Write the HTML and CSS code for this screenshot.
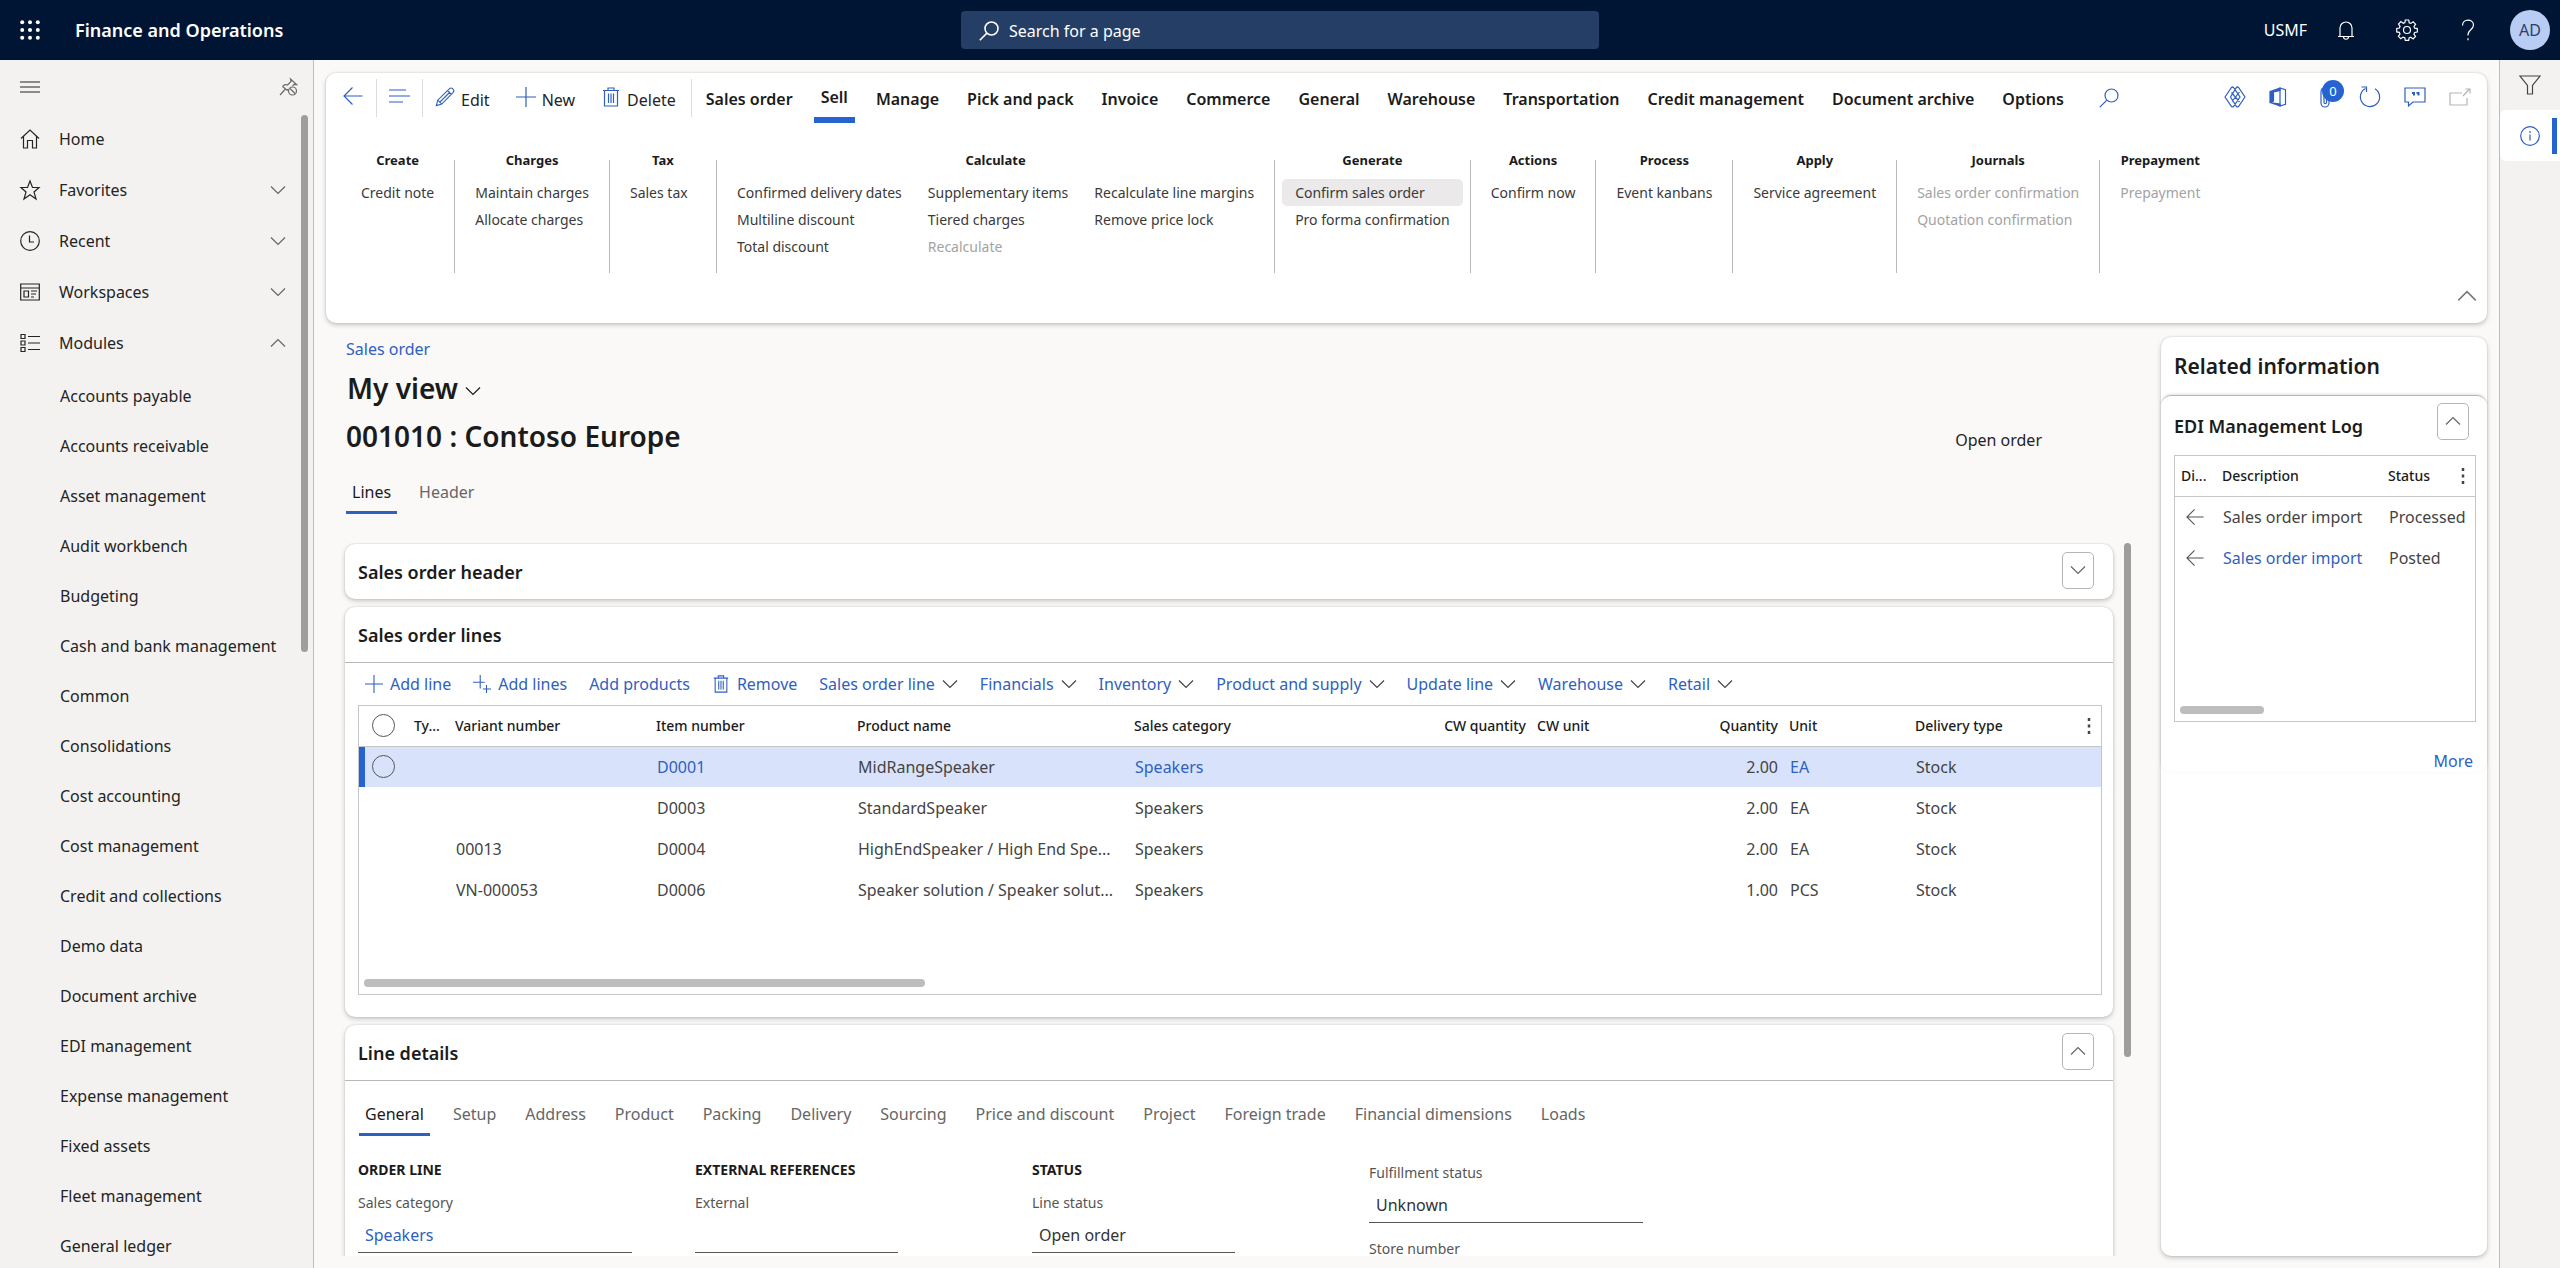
FILE: index.html
```html
<!DOCTYPE html>
<html lang="en">
<head>
<meta charset="utf-8">
<title>Finance and Operations</title>
<link rel="stylesheet" href="styles.css">
</head>
<body>
<svg class="sprite" aria-hidden="true">
  <symbol id="i-down" viewBox="0 0 16 16"><path d="M1 4.5l7 7 7-7"/></symbol>
  <symbol id="i-up" viewBox="0 0 16 16"><path d="M1 11.5l7-7 7 7"/></symbol>
  <symbol id="i-left" viewBox="0 0 20 20"><path d="M19.500 10H1M9.500 1.500L1 10l8.500 8.500"/></symbol>
  <symbol id="i-plus" viewBox="0 0 20 20"><path d="M10 0v20M0 10h20"/></symbol>
  <symbol id="i-plus2" viewBox="0 0 20 20"><path d="M8 0v15M0 8h13M15 11v9M11 15.500h9"/></symbol>
  <symbol id="i-trash" viewBox="0 0 20 20"><path d="M2 3.500h16M7 3.500V1h6v2.500M3.500 3.500V19h13V3.500M7.500 6.500v9.500M10 6.500v9.500M12.500 6.500v9.500"/></symbol>
  <symbol id="i-search" viewBox="0 0 20 20"><circle cx="12.500" cy="7.500" r="6.500"/><path d="M7.900 12.100L.8 19.200"/></symbol>
  <symbol id="i-kebab" viewBox="0 0 4 18"><path d="M2 1v3M2 7.500v3M2 14v3"/></symbol>
</svg>

<header class="topbar">
  <div class="top-left">
    <button class="icon-btn waffle" aria-label="App launcher"><svg width="20" height="20" viewBox="0 0 20 20"><g fill="#fff"><circle cx="2.200" cy="2.200" r="2"/><circle cx="10" cy="2.200" r="2"/><circle cx="17.800" cy="2.200" r="2"/><circle cx="2.200" cy="10" r="2"/><circle cx="10" cy="10" r="2"/><circle cx="17.800" cy="10" r="2"/><circle cx="2.200" cy="17.800" r="2"/><circle cx="10" cy="17.800" r="2"/><circle cx="17.800" cy="17.800" r="2"/></g></svg></button>
    <span class="brand">Finance and Operations</span>
  </div>
  <label class="search"><svg class="ic" width="20" height="20"><use href="#i-search"/></svg><input type="text" placeholder="Search for a page" aria-label="Search for a page"></label>
  <div class="top-tools">
    <button class="company">USMF</button>
    <button class="icon-btn" aria-label="Notifications"><svg class="ic" width="20" height="20" viewBox="0 0 20 20"><path d="M2 16.500h16M4 16.500V8a6 6 0 0 1 12 0v8.500M7.500 17c.3 3 4.700 3 5 0"/></svg></button>
    <button class="icon-btn" aria-label="Settings"><svg class="ic" width="22" height="22" viewBox="0 0 22 22"><path d="M9.300 1h3.400l.5 2.700 1.700.7 2.300-1.600 2.400 2.400L18 7.500l.7 1.700 2.600.4v3.400l-2.700.5-.7 1.700 1.600 2.300-2.400 2.400-2.300-1.600-1.700.7-.4 2.400H9.300l-.5-2.600-1.700-.7-2.300 1.600-2.400-2.400L4 15l-.7-1.700-2.600-.4V9.500L3.400 9l.7-1.700L2.500 5l2.400-2.400 2.300 1.600 1.700-.7z"/><circle cx="11" cy="11" r="3.500"/></svg></button>
    <button class="icon-btn" aria-label="Help"><svg class="ic" width="14" height="22" viewBox="0 0 14 22"><path d="M1.500 6.500C1.500-.5 12.500-.5 12.500 6c0 4.500-5.500 5-5.500 9.500v1M7 19.200v2"/></svg></button>
    <button class="avatar">AD</button>
  </div>
</header>

<div class="shell">
  <nav class="sidebar">
    <div class="side-top">
      <button class="icon-btn" aria-label="Collapse navigation"><svg class="ic" width="20" height="12" viewBox="0 0 20 12"><path d="M0 1h20M0 6h20M0 11h20"/></svg></button>
      <button class="icon-btn pin" aria-label="Unpin navigation"><svg class="ic" width="20" height="20" viewBox="0 0 20 20"><path d="M1 18l5-5.500M3.500 9.500l5 4M3.500 9.500C5 7.500 7 7.500 8.500 8L12 4.500 11.500 2l6 5.500-2.500-.2-1.500 1.500M8.500 13.500v-1.500"/><circle cx="13.500" cy="14" r="4"/><path d="M11 11.500l5 5"/></svg></button>
    </div>
    <a class="side-item" href="#"><svg class="ic" width="20" height="20" viewBox="0 0 20 20"><path d="M1 9.500L10 1l9 8.500M3.500 7.500V19h4v-7.500h5V19h4V7.500"/></svg>Home</a>
    <button class="side-item"><svg class="ic" width="20" height="20" viewBox="0 0 20 20"><path d="M10 1l2.500 6.500H19L14 12l2 7-6-4.300L4 19l2-7L1 7.500h6.500z"/></svg>Favorites<svg class="ic chev" width="16" height="16"><use href="#i-down"/></svg></button>
    <button class="side-item"><svg class="ic" width="20" height="20" viewBox="0 0 20 20"><circle cx="10" cy="10" r="9.300"/><path d="M9.500 4.500V11H14"/></svg>Recent<svg class="ic chev" width="16" height="16"><use href="#i-down"/></svg></button>
    <button class="side-item"><svg class="ic" width="20" height="18" viewBox="0 0 20 18"><path d="M.7 1h18.600v16H.7zM.7 5h18.600M4 8h4.500v6H4zM11 8h6M11 11h5M11 14h3"/></svg>Workspaces<svg class="ic chev" width="16" height="16"><use href="#i-down"/></svg></button>
    <button class="side-item"><svg class="ic" width="20" height="20" viewBox="0 0 20 20"><path d="M1 1.500h4v4H1zM1 8h4v4H1zM1 14.500h4v4H1zM8 3.500h12M8 10h12M8 16.500h12"/></svg>Modules<svg class="ic chev" width="16" height="16"><use href="#i-up"/></svg></button>
    <ul class="modules">
      <li><a href="#">Accounts payable</a></li>
      <li><a href="#">Accounts receivable</a></li>
      <li><a href="#">Asset management</a></li>
      <li><a href="#">Audit workbench</a></li>
      <li><a href="#">Budgeting</a></li>
      <li><a href="#">Cash and bank management</a></li>
      <li><a href="#">Common</a></li>
      <li><a href="#">Consolidations</a></li>
      <li><a href="#">Cost accounting</a></li>
      <li><a href="#">Cost management</a></li>
      <li><a href="#">Credit and collections</a></li>
      <li><a href="#">Demo data</a></li>
      <li><a href="#">Document archive</a></li>
      <li><a href="#">EDI management</a></li>
      <li><a href="#">Expense management</a></li>
      <li><a href="#">Fixed assets</a></li>
      <li><a href="#">Fleet management</a></li>
      <li><a href="#">General ledger</a></li>
    </ul>
    <span class="thumb side-thumb"></span>
  </nav>

  <main class="main">
    <section class="card action-pane">
      <div class="menu">
        <button class="icon-btn back blue" aria-label="Back"><svg class="ic" width="20" height="20"><use href="#i-left"/></svg></button>
        <span class="sep"></span>
        <button class="icon-btn view blue" aria-label="Show list"><svg class="ic" width="21" height="14" viewBox="0 0 21 14"><path d="M0 1h17M0 7h21M0 13h14"/></svg></button>
        <span class="sep"></span>
        <div class="cmds">
          <button class="cmd"><svg class="ic blue" width="20" height="22" viewBox="0 0 22 22"><path d="M1.500 20.500l1.500-6L16 1.800c2.500-2 6 1.500 4 4L7.500 18.800zM14 4l4 4M3 14.500l4.500 4.300M5.500 16.500L16.500 5.500"/></svg>Edit</button>
          <button class="cmd"><svg class="ic blue" width="20" height="20"><use href="#i-plus"/></svg>New</button>
          <button class="cmd"><svg class="ic blue" width="20" height="20"><use href="#i-trash"/></svg>Delete</button>
        </div>
        <span class="sep"></span>
        <div class="menu-tabs">
          <button>Sales order</button>
          <button class="on">Sell</button>
          <button>Manage</button>
          <button>Pick and pack</button>
          <button>Invoice</button>
          <button>Commerce</button>
          <button>General</button>
          <button>Warehouse</button>
          <button>Transportation</button>
          <button>Credit management</button>
          <button>Document archive</button>
          <button>Options</button>
        </div>
        <button class="icon-btn find blue" aria-label="Search actions"><svg class="ic" width="20" height="20"><use href="#i-search"/></svg></button>
        <div class="menu-tools blue">
          <button class="icon-btn" aria-label="Power Apps"><svg class="ic" width="22" height="22" viewBox="0 0 22 22"><path d="M1 11L7.500 1.500q1-1 2 0L16 11l-6.500 9.500q-1 1-2 0zM21 11l-6.500 9.500q-1 1-2 0L6.500 11l6-9.500q1-1 2 0zM7.500 6.500l8 9.500M15.500 6L8 15.500"/></svg></button>
          <button class="icon-btn" aria-label="Open in Office"><svg class="ic" width="18" height="20" viewBox="0 0 18 20"><path d="M1 4.500L11 1v2.500L4.500 5v9L1 15.500zM1 15.500l10 1.500v2z" fill="currentColor"/><path d="M11 1l5.500 1.800v14.400L11 19z"/></svg></button>
          <button class="icon-btn clip" aria-label="Attachments"><svg class="ic" width="12" height="22" viewBox="0 0 12 22"><path d="M1 6v11a4 4 0 0 0 8 0V6M4 8v8.500c0 1.500 2.500 1.500 2.500 0V5C6.500 1 1 1 1 6"/></svg><span class="badge">0</span></button>
          <button class="icon-btn" aria-label="Refresh"><svg class="ic" width="22" height="22" viewBox="0 0 22 22"><path d="M16 2.800A9.600 9.600 0 1 1 6.500 2.500M2.500 1h5v5"/></svg></button>
          <button class="icon-btn" aria-label="Feedback"><svg class="ic" width="22" height="20" viewBox="0 0 22 20"><path d="M1 1h20v14H9l-4.500 4v-4H1z"/><path d="M8 6h2v2.500M12.500 6h2v2.500" stroke-width="2"/></svg></button>
          <button class="icon-btn off" aria-label="Open in new window"><svg class="ic" width="22" height="18" viewBox="0 0 22 18"><path d="M13 5H1v12h17v-7M14 8l6.500-7M16.500 1H21v4.500"/></svg></button>
        </div>
      </div>
      <div class="ribbon">
        <div class="grp"><h3>Create</h3><div class="cols"><div><button>Credit note</button></div></div></div>
        <span class="rule"></span>
        <div class="grp"><h3>Charges</h3><div class="cols"><div><button>Maintain charges</button><button>Allocate charges</button></div></div></div>
        <span class="rule"></span>
        <div class="grp"><h3>Tax</h3><div class="cols"><div><button>Sales tax</button></div></div></div>
        <span class="rule"></span>
        <div class="grp"><h3>Calculate</h3><div class="cols">
          <div><button>Confirmed delivery dates</button><button>Multiline discount</button><button>Total discount</button></div>
          <div><button>Supplementary items</button><button>Tiered charges</button><button disabled>Recalculate</button></div>
          <div><button>Recalculate line margins</button><button>Remove price lock</button></div></div></div>
        <span class="rule"></span>
        <div class="grp"><h3>Generate</h3><div class="cols"><div><button class="hot">Confirm sales order</button><button>Pro forma confirmation</button></div></div></div>
        <span class="rule"></span>
        <div class="grp"><h3>Actions</h3><div class="cols"><div><button>Confirm now</button></div></div></div>
        <span class="rule"></span>
        <div class="grp"><h3>Process</h3><div class="cols"><div><button>Event kanbans</button></div></div></div>
        <span class="rule"></span>
        <div class="grp"><h3>Apply</h3><div class="cols"><div><button>Service agreement</button></div></div></div>
        <span class="rule"></span>
        <div class="grp"><h3>Journals</h3><div class="cols"><div><button disabled>Sales order confirmation</button><button disabled>Quotation confirmation</button></div></div></div>
        <span class="rule"></span>
        <div class="grp"><h3>Prepayment</h3><div class="cols"><div><button disabled>Prepayment</button></div></div></div>
      </div>
      <button class="icon-btn fold" aria-label="Collapse action pane"><svg class="ic" width="20" height="20"><use href="#i-up"/></svg></button>
    </section>

    <div class="work">
      <section class="record">
        <a class="crumb" href="#">Sales order</a>
        <button class="view-name">My view<svg class="ic" width="16" height="16"><use href="#i-down"/></svg></button>
        <div class="title-row"><h1>001010 : Contoso Europe</h1><span>Open order</span></div>
        <div class="tabs"><button class="on">Lines</button><button>Header</button></div>

        <div class="scroll-area">
          <div class="stack">
            <section class="card sec">
              <header><h2>Sales order header</h2><button class="toggle" aria-label="Expand"><svg class="ic" width="16" height="16"><use href="#i-down"/></svg></button></header>
            </section>

            <section class="card sec">
              <header class="lined"><h2>Sales order lines</h2></header>
              <div class="line-tools">
                <button><svg class="ic" width="18" height="18"><use href="#i-plus"/></svg>Add line</button>
                <button><svg class="ic" width="18" height="18"><use href="#i-plus2"/></svg>Add lines</button>
                <button>Add products</button>
                <button><svg class="ic" width="18" height="18"><use href="#i-trash"/></svg>Remove</button>
                <button>Sales order line<svg class="ic dk" width="16" height="16"><use href="#i-down"/></svg></button>
                <button>Financials<svg class="ic dk" width="16" height="16"><use href="#i-down"/></svg></button>
                <button>Inventory<svg class="ic dk" width="16" height="16"><use href="#i-down"/></svg></button>
                <button>Product and supply<svg class="ic dk" width="16" height="16"><use href="#i-down"/></svg></button>
                <button>Update line<svg class="ic dk" width="16" height="16"><use href="#i-down"/></svg></button>
                <button>Warehouse<svg class="ic dk" width="16" height="16"><use href="#i-down"/></svg></button>
                <button>Retail<svg class="ic dk" width="16" height="16"><use href="#i-down"/></svg></button>
              </div>
              <div class="grid lines-grid">
                <table>
                  <colgroup><col class="w-check"><col class="w-type"><col class="w-id"><col class="w-id"><col class="w-wide"><col class="w-wide"><col class="w-num"><col class="w-num"><col class="w-num"><col class="w-num"><col></colgroup>
                  <thead><tr><th><input type="radio" name="row" aria-label="Select all rows"></th><th title="Type">Ty...</th><th>Variant number</th><th>Item number</th><th>Product name</th><th>Sales category</th><th class="num">CW quantity</th><th>CW unit</th><th class="num">Quantity</th><th>Unit</th><th><div class="last"><span>Delivery type</span><button class="icon-btn" aria-label="Grid options"><svg class="ic" width="4" height="18"><use href="#i-kebab"/></svg></button></div></th></tr></thead>
                  <tbody>
                    <tr class="sel"><td><input type="radio" name="row" aria-label="Select row"></td><td></td><td></td><td><a href="#">D0001</a></td><td>MidRangeSpeaker</td><td><a href="#">Speakers</a></td><td></td><td></td><td class="num">2.00</td><td><a href="#">EA</a></td><td>Stock</td></tr>
                    <tr><td></td><td></td><td></td><td>D0003</td><td>StandardSpeaker</td><td>Speakers</td><td></td><td></td><td class="num">2.00</td><td>EA</td><td>Stock</td></tr>
                    <tr><td></td><td></td><td>00013</td><td>D0004</td><td>HighEndSpeaker / High End Spe...</td><td>Speakers</td><td></td><td></td><td class="num">2.00</td><td>EA</td><td>Stock</td></tr>
                    <tr><td></td><td></td><td>VN-000053</td><td>D0006</td><td>Speaker solution / Speaker solut...</td><td>Speakers</td><td></td><td></td><td class="num">1.00</td><td>PCS</td><td>Stock</td></tr>
                  </tbody>
                </table>
                <span class="thumb hbar"></span>
              </div>
            </section>

            <section class="card sec">
              <header class="lined"><h2>Line details</h2><button class="toggle" aria-label="Collapse"><svg class="ic" width="16" height="16"><use href="#i-up"/></svg></button></header>
              <div class="tabs detail-tabs"><button class="on">General</button><button>Setup</button><button>Address</button><button>Product</button><button>Packing</button><button>Delivery</button><button>Sourcing</button><button>Price and discount</button><button>Project</button><button>Foreign trade</button><button>Financial dimensions</button><button>Loads</button></div>
              <div class="fields">
                <div><h4>ORDER LINE</h4><div class="field"><label for="f1">Sales category</label><input id="f1" class="lookup" type="text" value="Speakers"></div></div>
                <div><h4>EXTERNAL REFERENCES</h4><div class="field short"><label for="f2">External</label><input id="f2" type="text"></div></div>
                <div><h4>STATUS</h4><div class="field short"><label for="f3">Line status</label><input id="f3" type="text" value="Open order"></div></div>
                <div class="untitled"><div class="field"><label for="f4">Fulfillment status</label><input id="f4" type="text" value="Unknown"></div><div class="field"><label for="f5">Store number</label><input id="f5" type="text"></div></div>
              </div>
            </section>
          </div>
          <span class="thumb vbar"></span>
        </div>
      </section>

      <aside class="card related">
        <h2>Related information</h2>
        <section class="edi">
          <header><h3>EDI Management Log</h3><button class="toggle" aria-label="Collapse"><svg class="ic" width="16" height="16"><use href="#i-up"/></svg></button></header>
          <div class="grid edi-grid">
            <table>
              <colgroup><col class="w-type"><col class="w-desc"><col></colgroup>
              <thead><tr><th title="Direction">Di...</th><th>Description</th><th><div class="last"><span>Status</span><button class="icon-btn" aria-label="Grid options"><svg class="ic" width="4" height="18"><use href="#i-kebab"/></svg></button></div></th></tr></thead>
              <tbody>
                <tr><td><svg class="ic arrow" width="18" height="18"><use href="#i-left"/></svg></td><td>Sales order import</td><td>Processed</td></tr>
                <tr><td><svg class="ic arrow" width="18" height="18"><use href="#i-left"/></svg></td><td><a href="#">Sales order import</a></td><td>Posted</td></tr>
              </tbody>
            </table>
            <span class="thumb hbar"></span>
          </div>
          <a class="more" href="#">More</a>
        </section>
      </aside>
    </div>
  </main>

  <aside class="rail">
    <button aria-label="Filters"><svg class="ic" width="22" height="20" viewBox="0 0 22 20"><path d="M1 1h20l-7.500 9.500V19h-5v-8.500z"/></svg></button>
    <button class="on" aria-label="Related information"><svg class="ic" width="20" height="20" viewBox="0 0 20 20"><circle cx="10" cy="10" r="9.300"/><path d="M10 8.500v6M10 5v2"/></svg></button>
  </aside>
</div>
</body>
</html>
```
FILE: styles.css
```css
* { box-sizing: border-box; }

:root {
  --ink: #242424;
  --blue: #2f5fc0;
  --accent: #2563d0;
  --panel: #f3f2f1;
  --line: #c6c6c6;
}

body {
  margin: 0;
  height: 100vh;
  display: flex;
  flex-direction: column;
  overflow: hidden;
  background: #faf9f8;
  color: var(--ink);
  font: 16px/22px "Noto Sans", "Open Sans", sans-serif;
}

button, input { font: inherit; color: inherit; }
button { border: 0; padding: 0; background: none; white-space: nowrap; }
a { color: var(--blue); text-decoration: none; }
h1, h2, h3, h4 { margin: 0; font-weight: 600; color: #1b1b1b; }

.sprite { position: absolute; width: 0; height: 0; }
.ic { fill: none; stroke: currentColor; stroke-width: 1.2; flex: none; display: block; overflow: visible; }
.icon-btn { display: flex; align-items: center; justify-content: center; }
.blue { color: var(--blue); }
.thumb { display: block; border-radius: 4px; background: #9e9e9e; }

.card {
  background: #fff;
  border-radius: 10px;
  box-shadow: 0 0 2px rgba(0, 0, 0, .16), 0 2px 5px rgba(0, 0, 0, .2);
}

/* Top bar */
.topbar {
  flex: none;
  height: 60px;
  display: grid;
  grid-template-columns: 1fr 638px 1fr;
  align-items: center;
  background: #001433;
  color: #fff;
}
.top-left { display: flex; align-items: center; gap: 15px; }
.waffle { width: 60px; }
.brand { font-size: 18px; font-weight: 600; }
.search {
  display: flex;
  align-items: center;
  gap: 10px;
  height: 38px;
  padding: 2px 18px 0;
  border-radius: 4px;
  background: #243e65;
}
.search .ic { stroke-width: 1.6; }
.search input { flex: 1; border: 0; background: none; outline: 0; padding: 0; }
.search input::placeholder { color: #fff; opacity: 1; }
.top-tools { display: flex; align-items: center; justify-content: flex-end; padding-right: 10px; }
.top-tools .icon-btn { width: 61px; }
.company { margin-right: 8px; }
.avatar { width: 40px; height: 40px; margin-left: 12px; border-radius: 50%; background: #b8ccf4; color: #2f3f66; }

.shell { flex: 1; min-height: 0; display: flex; }

/* Navigation */
.sidebar {
  position: relative;
  flex: none;
  width: 314px;
  overflow: hidden;
  background: var(--panel);
  border-right: 1px solid #bebdbc;
}
.side-top { display: flex; justify-content: space-between; align-items: center; height: 53px; padding: 0 14px 0 20px; }
.pin { color: #6a6a6a; }
.side-item {
  display: flex;
  align-items: center;
  gap: 19px;
  width: 100%;
  height: 51px;
  padding: 0 27px 0 20px;
  color: var(--ink);
  text-align: left;
}
.side-item .chev { margin-left: auto; color: #666; }
.modules { list-style: none; margin: 0; padding: 3px 0 0 60px; }
.modules a { display: block; line-height: 50px; color: var(--ink); }
.side-thumb { position: absolute; top: 55px; right: 5px; width: 7px; height: 537px; }

/* Right rail */
.rail { flex: none; width: 61px; background: var(--panel); border-left: 1px solid #bebdbc; }
.rail button { display: flex; align-items: center; justify-content: center; width: 100%; height: 50px; color: #444; }
.rail .on {
  height: 51px;
  color: var(--blue);
  border-radius: 6px 0 0 6px;
  background: linear-gradient(var(--accent), var(--accent)) no-repeat right 3px center / 5px 36px #fff;
}

.main { flex: 1; min-width: 0; display: flex; flex-direction: column; padding: 13px 12px 12px; }

/* Action pane */
.action-pane { flex: none; height: 250px; display: flex; flex-direction: column; }
.menu { display: flex; align-items: center; height: 50px; }
.sep { width: 1px; height: 38px; background: #dcdcdc; }
.back { width: 50px; padding: 0 0 4px 4px; }
.view { width: 45px; padding-bottom: 4px; }
.cmds { display: flex; gap: 26px; padding: 4px 15px 0 12px; }
.cmd { display: flex; align-items: center; gap: 6px; }
.cmd .ic { margin-bottom: 6px; }
.menu-tabs { display: flex; gap: 14px; padding-left: 7px; }
.menu-tabs button { height: 50px; padding: 8px 7px 0; border-bottom: 6px solid transparent; font-weight: 600; color: #1b1b1b; }
.menu-tabs .on { border-color: var(--accent); padding-top: 4px; }
.find { margin-left: 28px; }
.menu-tools { display: flex; align-items: center; margin-left: auto; padding: 0 16px 2px 0; gap: 23px; }
.menu-tools .off { color: #b5b5b5; }
.clip { position: relative; width: 22px; justify-content: flex-start; margin-left: 10px; margin-right: -6px; }
.badge {
  position: absolute;
  left: 2px;
  top: -6px;
  width: 22px;
  height: 22px;
  border-radius: 50%;
  background: var(--accent);
  color: #fff;
  font-size: 13px;
}

.ribbon { flex: 1; display: flex; padding: 27px 0 0 15px; font-size: 14px; line-height: 20px; }
.grp { min-width: 106px; padding: 0 7px; }
.grp h3 { font-size: 13px; font-weight: 700; text-align: center; margin-bottom: 9px; }
.cols { display: flex; }
.cols button { display: block; width: 100%; padding: 0 13px; line-height: 27px; text-align: left; border-radius: 5px; color: #3a3a3a; }
.cols button:disabled { color: #a3a3a3; }
.cols .hot { background: #ebe9e9; }
.rule { flex: none; width: 1px; height: 113px; margin-top: 10px; background: #b9b9b9; }
.fold { align-self: flex-end; margin: 0 10px 17px; color: #777; }

/* Record */
.work { flex: 1; min-height: 0; display: flex; gap: 30px; padding-top: 14px; }
.record { flex: 1; min-width: 0; display: flex; flex-direction: column; align-items: stretch; padding-left: 19px; }
.crumb { line-height: 24px; padding-left: 1px; }
.view-name { display: flex; align-items: center; gap: 7px; margin-top: 6px; padding-left: 2px; font-size: 28px; line-height: 42px; font-weight: 600; color: #1b1b1b; }
.view-name .ic { margin-top: 6px; }
.title-row { display: flex; justify-content: space-between; align-items: flex-end; padding: 0 89px 0 1px; margin-top: 6px; }
.title-row span { padding-bottom: 6px; }
h1 { font-size: 28px; line-height: 42px; }
.tabs { display: flex; gap: 16px; }
.tabs button { padding: 0 6px 8px; border-bottom: 3px solid transparent; color: #666; }
.tabs .on { color: #1b1b1b; border-color: var(--blue); }
.record > .tabs { margin: 24px 0 29px 1px; }

.scroll-area { flex: 1; min-height: 0; display: flex; gap: 11px; overflow: hidden; margin-left: -6px; padding-left: 6px; }
.stack { flex: 1; min-width: 0; display: flex; flex-direction: column; gap: 8px; padding-top: 1px; }
.sec { flex: none; }
.sec > header { display: flex; align-items: center; justify-content: space-between; height: 55px; padding: 0 19px 0 13px; }
.sec > .lined { border-bottom: 1px solid #b9b9b9; height: 56px; }
h2 { font-size: 18px; }
.toggle {
  display: flex;
  align-items: center;
  justify-content: center;
  width: 32px;
  height: 37px;
  margin-bottom: 3px;
  border: 1px solid #b5b5b5;
  border-radius: 5px;
  color: #666;
}
.vbar { width: 7px; height: 514px; }

.line-tools { display: flex; gap: 22px; height: 42px; padding: 0 20px; color: var(--blue); }
.line-tools button { display: flex; align-items: center; gap: 7px; }
.line-tools .dk { color: #444; }

/* Grids */
.grid { border: 1px solid var(--line); display: flex; flex-direction: column; justify-content: space-between; }
.lines-grid { height: 290px; margin: 0 11px 22px 13px; }
.grid table { width: 100%; table-layout: fixed; border-collapse: collapse; }
.grid th, .grid td { height: 41px; padding: 0 6px; text-align: left; white-space: nowrap; overflow: hidden; text-overflow: ellipsis; }
.grid th { height: 40px; font-size: 14px; font-weight: 500; color: #1b1b1b; border-bottom: 1px solid var(--line); }
.grid td { padding: 0 0 0 7px; color: #444; }
.grid .num { text-align: right; padding-right: 5px; }
.last { display: flex; align-items: center; justify-content: space-between; }
.last .ic { stroke-width: 2.5; color: #444; }
.last .icon-btn { width: 12px; }
.w-check { width: 49px; }
.w-type { width: 41px; }
.w-id { width: 201px; }
.w-wide { width: 277px; }
.w-num { width: 126px; }
.w-desc { width: 166px; }
.sel { background: #d8e3fb; }
.sel td:first-child { box-shadow: inset 6px 0 var(--accent); }
.grid input {
  appearance: none;
  display: block;
  width: 23px;
  height: 23px;
  margin: 0 0 0 6px;
  border: 1px solid #555;
  border-radius: 50%;
}
.grid th input { margin-left: 7px; }
.hbar { background: #bdbdbd; height: 8px; margin: 0 5px 7px; width: 561px; }

/* Line details */
.detail-tabs { padding: 22px 14px 0; gap: 17px; }
.fields { display: grid; grid-template-columns: repeat(4, 337px); padding: 24px 13px; font-size: 14px; line-height: 20px; }
.fields h4 { font-size: 14px; font-weight: 700; margin-bottom: 13px; }
.untitled { padding-top: 3px; }
.field { width: 274px; margin-bottom: 16px; color: #555; }
.short { width: 203px; }
.field label { display: block; margin-bottom: 5px; }
.field input { display: block; width: 100%; height: 35px; padding: 0 7px; border: 0; border-bottom: 1px solid #555; background: none; font-size: 16px; color: #333; }
.field .lookup { color: var(--blue); }

/* Related information */
.related { flex: none; width: 326px; }
.related > h2 { font-size: 21px; line-height: 28px; padding: 15px 13px; }
.edi { border-radius: 10px; margin: 0; border-top: 1px solid #b5b5b5; padding: 0 11px 0 13px; box-shadow: 0 -1px 3px rgba(0, 0, 0, .12); }
.edi header { display: flex; align-items: center; justify-content: space-between; height: 59px; padding-right: 7px; }
.edi h3 { font-size: 18px; }
.edi .toggle { margin-bottom: 9px; }
.edi-grid { height: 267px; }
.edi-grid .hbar { width: 84px; }
.edi-grid td:first-child { padding-left: 11px; }
.arrow { color: #555; }
.more { display: block; margin: 28px 3px; text-align: right; }
```
